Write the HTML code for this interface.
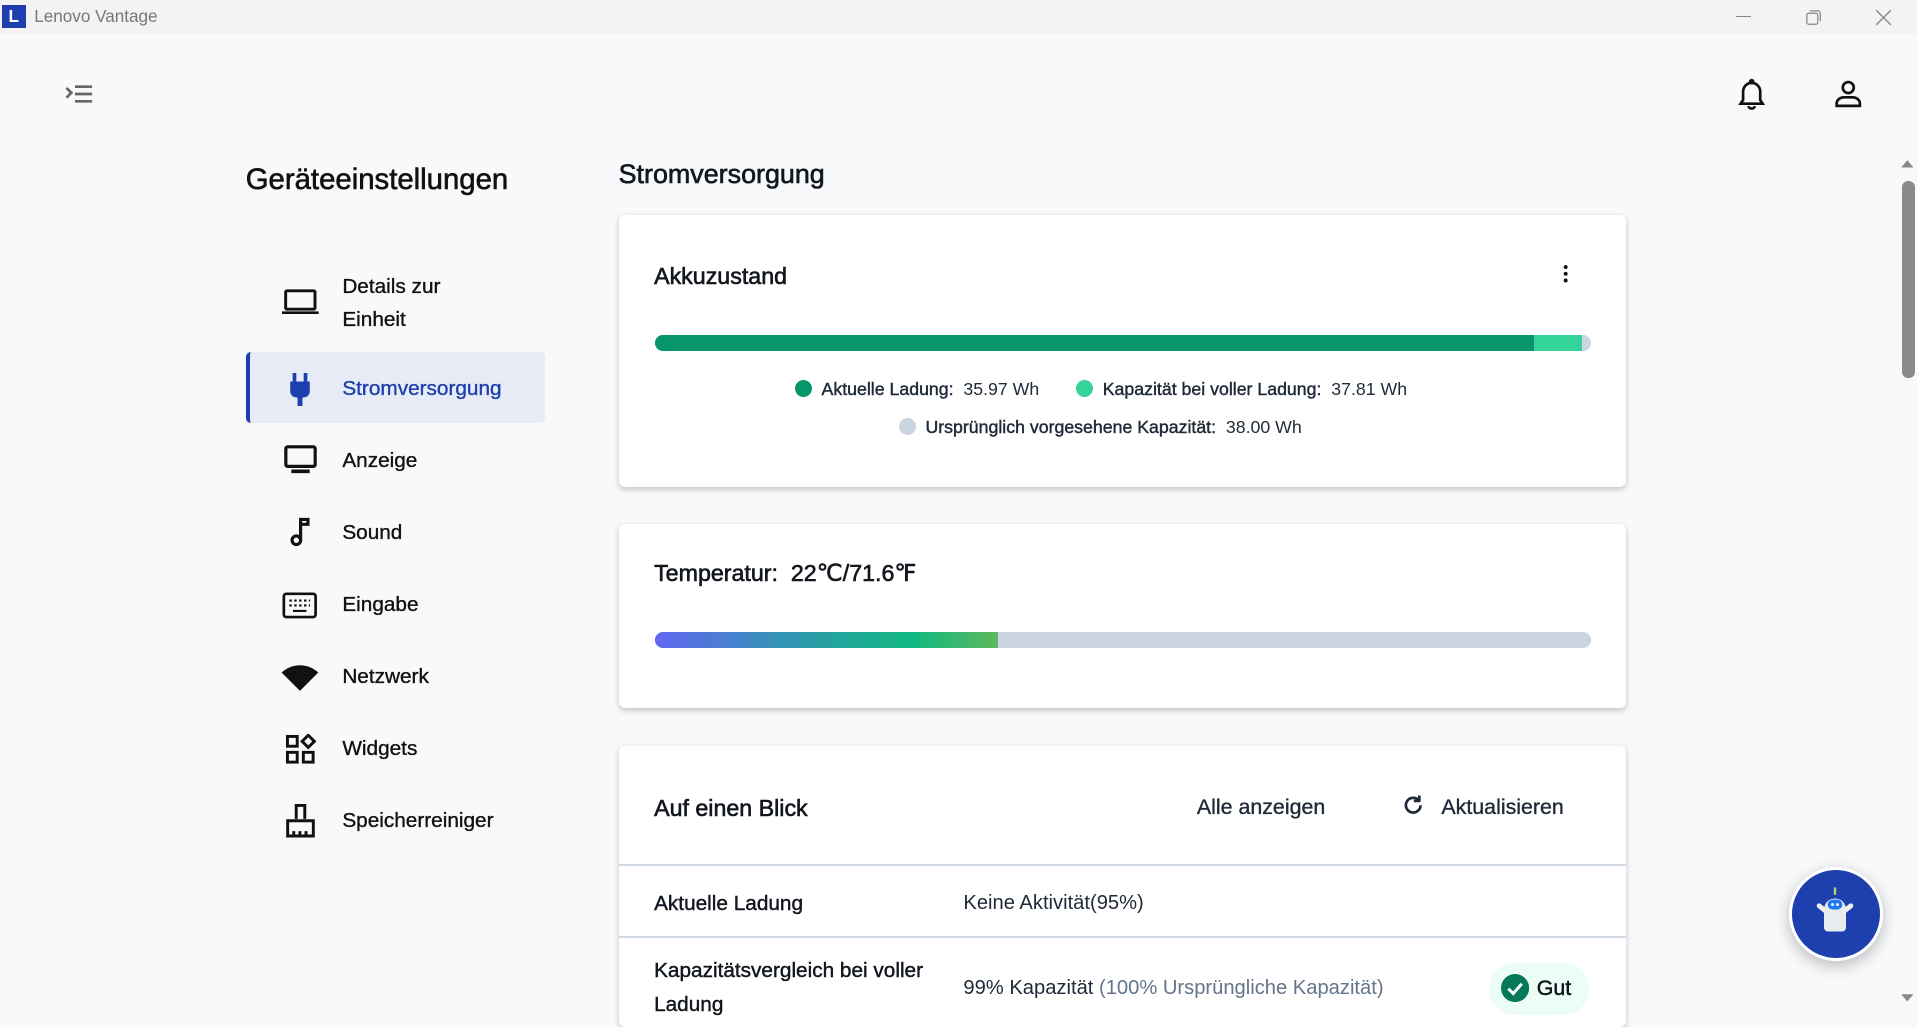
<!DOCTYPE html>
<html><head><meta charset="utf-8">
<style>
html{zoom:1.22258}
*{margin:0;padding:0;box-sizing:border-box}
body{width:1568px;height:823px;overflow:hidden;background:#f8f9fb;font-family:"Liberation Sans",sans-serif;color:#111827;position:relative}
.a{position:absolute;white-space:nowrap}
.tb{position:absolute;left:0;top:0;width:1568px;height:28px;background:#f3f3f3}
.nav{font-size:17px;color:#111;-webkit-text-stroke:0.3px #111}
.card{position:absolute;left:506px;width:824px;background:#fff;border-radius:5px;box-shadow:0 2px 5px rgba(0,0,0,.22)}
.ic{position:absolute}
.dot{display:inline-block;width:14px;height:14px;border-radius:50%;vertical-align:-2px;margin-right:8px}
.lg{font-size:14.5px;color:#1f2937}
.lg b{font-weight:normal;-webkit-text-stroke:0.35px #1f2937}
.h{-webkit-text-stroke:0.5px #111}
</style></head><body>
<div class="tb"></div>
<div class="a" style="left:2px;top:4px;width:19px;height:19px;background:#1e3fae;color:#fff;font-weight:bold;font-size:14px;line-height:19px;padding-left:5px">L</div>
<div class="a" style="left:28px;top:6px;font-size:14px;color:#777">Lenovo Vantage</div>
<div class="a" style="left:1420px;top:13px;width:12px;height:1px;background:#888"></div>
<svg class="ic" style="left:1476px;top:7px" width="14" height="14" viewBox="0 0 14 14" fill="none" stroke="#888" stroke-width="1"><rect x="1.5" y="3.5" width="9" height="9" rx="1.5"/><path d="M4 1.5h6.5a2 2 0 0 1 2 2V10"/></svg>
<svg class="ic" style="left:1534px;top:7px" width="14" height="14" viewBox="0 0 14 14" stroke="#888" stroke-width="1.1"><path d="M1 1l12 12M13 1L1 13"/></svg>

<svg class="ic" style="left:52px;top:68px" width="24" height="18" viewBox="0 0 24 18" fill="none" stroke="#666" stroke-width="2.2"><path d="M2 4l4 4-4 4M9 3h14M9 9h14M9 15h14"/></svg>
<svg class="ic" style="left:1421px;top:64px" width="24" height="26" viewBox="0 0 24 26" fill="none" stroke="#111" stroke-width="2.2"><path d="M12 4a7 7 0 0 0-7 7v7l-2 3h18l-2-3v-7a7 7 0 0 0-7-7zM9.5 23a2.5 2 0 0 0 5 0" /><circle cx="12" cy="3" r="1.2" fill="#111"/></svg>
<svg class="ic" style="left:1499px;top:65px" width="25" height="24" viewBox="0 0 25 24" fill="none" stroke="#111" stroke-width="2.2"><circle cx="12.5" cy="7" r="4.5"/><path d="M3 22v-2a6 5 0 0 1 6-5h7a6 5 0 0 1 6 5v2z"/></svg>

<div class="a h" style="left:201px;top:133px;font-size:24px;color:#111">Geräteeinstellungen</div>

<svg class="ic" style="left:231px;top:236px" width="30" height="21" viewBox="0 0 30 21" fill="none" stroke="#111" stroke-width="2.4"><rect x="3" y="1.5" width="24" height="15" rx="1"/><path d="M0 19.5h30"/></svg>
<div class="a nav" style="left:280px;top:221px;line-height:27px">Details zur<br>Einheit</div>

<div class="a" style="left:201px;top:288px;width:245px;height:58px;background:#e7ebf6;border-radius:4px;border-left:4px solid #1e3fae"></div>
<svg class="ic" style="left:236px;top:305px" width="18" height="27" viewBox="0 0 18 27" fill="#1e3fae"><rect x="3" y="0" width="3" height="7"/><rect x="12" y="0" width="3" height="7"/><path d="M1 7h16v8a5 5 0 0 1-5 5h-1v7h-4v-7h-1a5 5 0 0 1-5-5z"/></svg>
<div class="a nav" style="left:280px;top:308px;color:#1e3fae;-webkit-text-stroke:0.3px #1e3fae">Stromversorgung</div>

<svg class="ic" style="left:232px;top:364px" width="27" height="24" viewBox="0 0 27 24" fill="none" stroke="#111" stroke-width="2.6"><rect x="1.5" y="1.5" width="24" height="16" rx="1.5"/><path d="M6 21.5h15" stroke-width="3"/></svg>
<div class="a nav" style="left:280px;top:367px">Anzeige</div>

<svg class="ic" style="left:236px;top:423px" width="20" height="25" viewBox="0 0 20 25" fill="none" stroke="#111" stroke-width="2.6"><circle cx="6" cy="19" r="3.5"/><path d="M9.5 19V2h6v4h-6"/></svg>
<div class="a nav" style="left:280px;top:426px">Sound</div>

<svg class="ic" style="left:231px;top:484px" width="29" height="22" viewBox="0 0 29 22" fill="none" stroke="#111" stroke-width="2.2"><rect x="1.5" y="1.5" width="26" height="19" rx="2"/><path d="M6 7h2M10 7h2M14 7h2M18 7h2M22 7h1M6 11h2M10 11h2M14 11h2M18 11h2M22 11h1M9 15.5h11" stroke-width="1.8"/></svg>
<div class="a nav" style="left:280px;top:485px">Eingabe</div>

<svg class="ic" style="left:230px;top:543px" width="31" height="22" viewBox="0 0 31 22" fill="#111"><path d="M0.5 7C9 -1 22 -1 30.5 7L15.5 22z"/></svg>
<div class="a nav" style="left:280px;top:544px">Netzwerk</div>

<svg class="ic" style="left:233px;top:600px" width="26" height="26" viewBox="0 0 26 26" fill="none" stroke="#111" stroke-width="2.4"><rect x="2" y="2" width="8" height="8"/><rect x="2" y="15" width="8" height="8"/><rect x="15" y="15" width="8" height="8"/><path d="M19 1l5 5-5 5-5-5z"/></svg>
<div class="a nav" style="left:280px;top:603px">Widgets</div>

<svg class="ic" style="left:232px;top:657px" width="27" height="29" viewBox="0 0 27 29" fill="none" stroke="#111" stroke-width="2.4"><path d="M10 13V2h7v11M3 14.5h21v12.5H3zM3 27v-7M8 27v-4M13 27v-4M18 27v-4M24 27v-7"/></svg>
<div class="a nav" style="left:280px;top:662px">Speicherreiniger</div>

<div class="a h" style="left:506px;top:130px;font-size:22px">Stromversorgung</div>

<div class="card" style="top:176px;height:222px"></div>
<div class="a h" style="left:535px;top:215px;font-size:19px">Akkuzustand</div>
<svg class="ic" style="left:1278px;top:216px" width="6" height="16" viewBox="0 0 6 16" fill="#111"><circle cx="3" cy="2.5" r="1.6"/><circle cx="3" cy="8" r="1.6"/><circle cx="3" cy="13.5" r="1.6"/></svg>
<div class="a" style="left:536px;top:274px;width:765px;height:13px;border-radius:7px;background:#cbd5e1;overflow:hidden">
<div style="position:absolute;left:0;top:0;width:758px;height:13px;background:#34d399"></div>
<div style="position:absolute;left:0;top:0;width:719px;height:13px;background:#079669"></div></div>
<div class="a lg" style="left:650px;top:310px"><span class="dot" style="background:#079669"></span><b>Aktuelle Ladung:</b>&nbsp; 35.97 Wh</div>
<div class="a lg" style="left:880px;top:310px"><span class="dot" style="background:#34d399"></span><b>Kapazität bei voller Ladung:</b>&nbsp; 37.81 Wh</div>
<div class="a lg" style="left:735px;top:341px"><span class="dot" style="background:#cbd5e1"></span><b>Ursprünglich vorgesehene Kapazität:</b>&nbsp; 38.00 Wh</div>

<div class="card" style="top:429px;height:150px"></div>
<div class="a h" style="left:535px;top:458px;font-size:19px">Temperatur:&nbsp; 22℃/71.6℉</div>
<div class="a" style="left:536px;top:517px;width:765px;height:13px;border-radius:7px;background:#cbd5e1;overflow:hidden">
<div style="position:absolute;left:0;top:0;width:280px;height:13px;background:linear-gradient(90deg,#6366f1,#2f97b0 40%,#10b981 75%,#5cb85c)"></div></div>

<div class="card" style="top:610px;height:230px"></div>
<div class="a h" style="left:535px;top:650px;font-size:19px">Auf einen Blick</div>
<div class="a" style="left:979px;top:650px;font-size:17.5px;color:#1f2937;-webkit-text-stroke:0.3px #1f2937">Alle anzeigen</div>
<svg class="ic" style="left:1146px;top:649px" width="20" height="20" viewBox="0 0 20 20" fill="none" stroke="#1f2937" stroke-width="2.2"><path d="M16 10a6 6 0 1 1-2-4.5"/><path d="M15 2v4.5h-4.5" stroke-linejoin="round"/></svg>
<div class="a" style="left:1179px;top:650px;font-size:17.5px;color:#1f2937;-webkit-text-stroke:0.3px #1f2937">Aktualisieren</div>
<div class="a" style="left:506px;top:707px;width:824px;height:1.5px;background:#d1d9e3"></div>
<div class="a" style="left:535px;top:730px;font-size:17px;-webkit-text-stroke:0.35px #111">Aktuelle Ladung</div>
<div class="a" style="left:788px;top:730px;font-size:16.5px;color:#1f2937">Keine Aktivität(95%)</div>
<div class="a" style="left:506px;top:766px;width:824px;height:1.5px;background:#d1d9e3"></div>
<div class="a" style="left:535px;top:780px;font-size:17px;line-height:28px;-webkit-text-stroke:0.35px #111">Kapazitätsvergleich bei voller<br>Ladung</div>
<div class="a" style="left:788px;top:799px;font-size:16.5px;color:#1f2937">99% Kapazität <span style="color:#64748b">(100% Ursprüngliche Kapazität)</span></div>
<div class="a" style="left:1218px;top:788px;width:82px;height:42px;border-radius:21px;background:#ecfdf5"></div>
<svg class="ic" style="left:1228px;top:797px" width="23" height="23" viewBox="0 0 23 23"><circle cx="11.5" cy="11.5" r="11.5" fill="#047857"/><path d="M6 12l4 4 7-8" fill="none" stroke="#fff" stroke-width="2.4"/></svg>
<div class="a" style="left:1257px;top:798px;font-size:17.5px;-webkit-text-stroke:0.4px #111">Gut</div>

<div class="a" style="left:1552px;top:28px;width:16px;height:795px;background:#f9f9fa"></div>
<svg class="ic" style="left:1554px;top:130px" width="12" height="8" viewBox="0 0 12 8" fill="#888"><path d="M6 1l5 6H1z"/></svg>
<div class="a" style="left:1556px;top:148px;width:10px;height:161px;border-radius:5px;background:#8a8a8a"></div>
<svg class="ic" style="left:1554px;top:812px" width="12" height="8" viewBox="0 0 12 8" fill="#888"><path d="M6 7l5-6H1z"/></svg>

<div class="a" style="left:1463px;top:709px;width:77px;height:77px;border-radius:50%;background:#1e3fae;border:3px solid #fff;box-shadow:0 4px 12px rgba(0,0,0,.25)"></div>
<svg class="ic" style="left:1483px;top:724px" width="36" height="42" viewBox="0 0 36 42"><path d="M18 2v6" stroke="#b5d36a" stroke-width="2"/><path d="M5 17l5 4M31 17l-5 4" stroke="#eee" stroke-width="4" stroke-linecap="round"/><path d="M9 20a9 9 0 0 1 18 0v15a3 3 0 0 1-3 3h-12a3 3 0 0 1-3-3z" fill="#e9ecef"/><rect x="12" y="12" width="12" height="8" rx="4" fill="#1d78f2"/><circle cx="16" cy="16" r="1.2" fill="#fff"/><circle cx="20" cy="16" r="1.2" fill="#fff"/></svg>
</body></html>
